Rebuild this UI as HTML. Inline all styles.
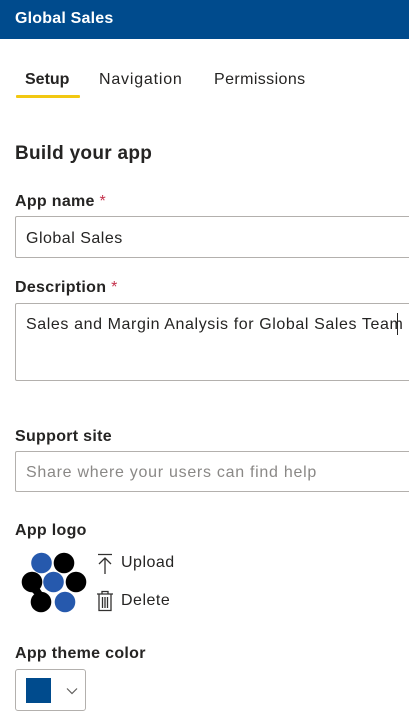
<!DOCTYPE html>
<html><head><style>
body{margin:0;width:409px;height:719px;overflow:hidden;background:#fff;font-family:"Liberation Sans",sans-serif;color:#252423;position:relative}
.a{position:absolute;white-space:nowrap}
.hdr{position:absolute;left:0;top:0;width:409px;height:39px;background:#004b8d}
.box{position:absolute;left:15px;width:420px;border:1px solid #b3b0ad;border-radius:2px;box-sizing:border-box;background:#fff}
.lbl{font-size:16px;font-weight:bold;color:#252423;letter-spacing:0.3px}
.req{color:#c4314b;font-weight:normal}
.t16{font-size:16px}
</style></head><body>
<div class="hdr"></div>
<div class="a" style="left:15px;top:10px;color:#fff;font-weight:bold;font-size:16px;letter-spacing:0.2px">Global Sales</div>
<div class="a t16" style="left:25px;top:71px;font-weight:bold;font-size:16px">Setup</div>
<div class="a" style="left:16px;top:95px;width:64px;height:3px;background:#f2c811;border-radius:1px"></div>
<div class="a t16" style="left:99px;top:71px;letter-spacing:0.8px">Navigation</div>
<div class="a t16" style="left:214px;top:71px;letter-spacing:0.4px">Permissions</div>
<div class="a" style="left:15px;top:143px;font-size:19px;font-weight:bold;letter-spacing:0.3px">Build your app</div>
<div class="a lbl" style="left:15px;top:193px">App name <span class="req">*</span></div>
<div class="box" style="top:216px;height:42px"></div>
<div class="a t16" style="left:26px;top:230px;letter-spacing:0.5px">Global Sales</div>
<div class="a lbl" style="left:15px;top:279px">Description <span class="req">*</span></div>
<div class="box" style="top:303px;height:78px"></div>
<div class="a t16" style="left:26px;top:316px;letter-spacing:0.6px">Sales and Margin Analysis for Global Sales Team</div>
<div class="a" style="left:397px;top:313px;width:1px;height:22px;background:#252423"></div>
<div class="a lbl" style="left:15px;top:428px">Support site</div>
<div class="box" style="top:451px;height:41px"></div>
<div class="a t16" style="left:26px;top:464px;color:#8a8886;letter-spacing:0.72px">Share where your users can find help</div>
<div class="a lbl" style="left:15px;top:522px">App logo</div>
<svg class="a" style="left:18px;top:548px" width="72" height="68" viewBox="18 548 72 68">
<g fill="#000"><circle cx="64" cy="563" r="10.3"/><circle cx="32" cy="582" r="10.3"/><circle cx="76" cy="582" r="10.3"/><circle cx="41" cy="602" r="10.3"/><path d="M30 590 L36 596 L42 592 L38 586Z"/></g>
<g fill="#2659ad"><circle cx="41.5" cy="563" r="10.3"/><circle cx="53.5" cy="582" r="10.3"/><circle cx="65" cy="602" r="10.3"/></g>
</svg>
<svg class="a" style="left:96px;top:553px" width="18" height="22" viewBox="0 0 18 22"><path d="M2 1.5H16M9 5V21M3 11L9 5L15 11" fill="none" stroke="#323130" stroke-width="1.3"/></svg>
<div class="a t16" style="left:121px;top:554px;letter-spacing:0.5px">Upload</div>
<svg class="a" style="left:96px;top:590px" width="18" height="22" viewBox="0 0 18 22"><path d="M1 4H17M6 4V1.5H12V4M3 4V20.5H15V4M6.5 7V18M9 7V18M11.5 7V18" fill="none" stroke="#323130" stroke-width="1.3"/></svg>
<div class="a t16" style="left:121px;top:592px;letter-spacing:0.5px">Delete</div>
<div class="a lbl" style="left:15px;top:645px">App theme color</div>
<div class="a" style="left:15px;top:669px;width:71px;height:42px;border:1px solid #b3b0ad;border-radius:3px;box-sizing:border-box"></div>
<div class="a" style="left:26px;top:678px;width:25px;height:25px;background:#004b8d"></div>
<svg class="a" style="left:66px;top:687px" width="12" height="8" viewBox="0 0 12 8"><path d="M1 1.5L6 6.5L11 1.5" fill="none" stroke="#605e5c" stroke-width="1.2"/></svg>
</body></html>
